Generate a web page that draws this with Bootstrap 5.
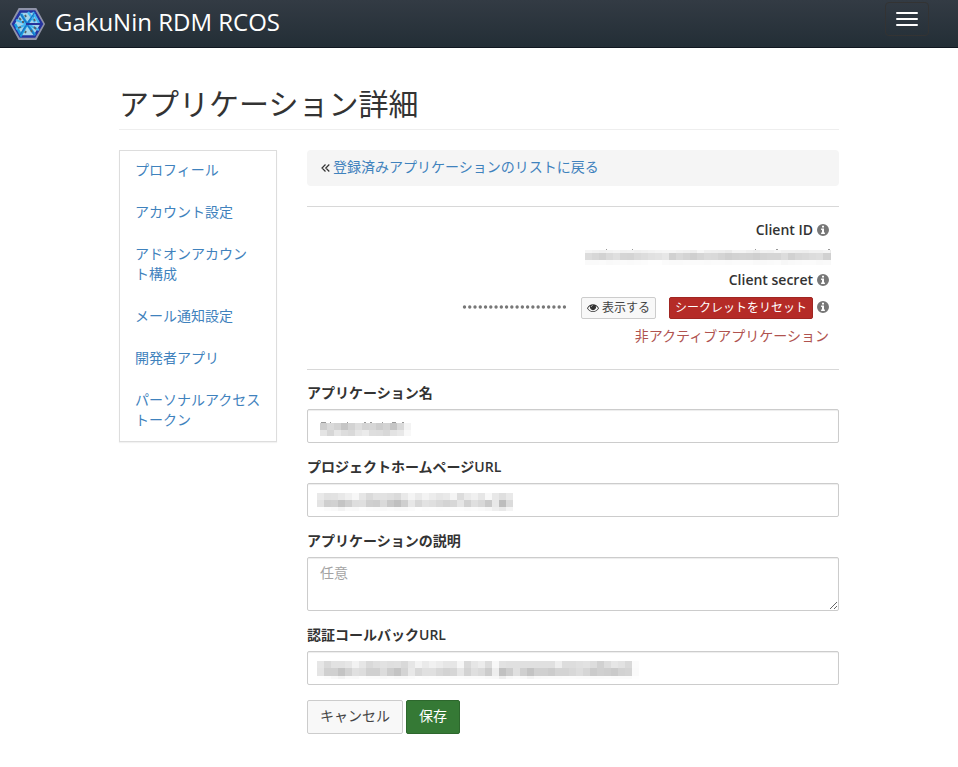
<!DOCTYPE html>
<html lang="ja">
<head>
<meta charset="utf-8">
<meta name="viewport" content="width=device-width, initial-scale=1">
<title>GakuNin RDM RCOS</title>
<link href="https://cdn.jsdelivr.net/npm/bootstrap@5.3.0/dist/css/bootstrap.min.css" rel="stylesheet">
<style>
body{font-family:"Open Sans","Noto Sans CJK JP",sans-serif;font-size:14px;line-height:20px;color:#333}
a{color:#3f82bd;text-decoration:none}
.topbar{height:48px;padding:0 29px 0 9px;background:linear-gradient(#333b44,#232e36);border-bottom:1px solid #101720}
.topbar .navbar-brand{font-size:24px;line-height:30px;color:#fff;margin:0;padding:0;gap:9px}
.topbar .navbar-brand span{margin-top:-3px}
.topbar .navbar-toggler{width:44px;height:34px;padding:0 10px;border:1px solid #333;border-radius:4px;gap:4px;margin-top:-9px}
.topbar .navbar-toggler i{height:2px;width:22px;background:#fff;border-radius:1px}
.page{width:720px;margin-left:119px}
.page-title{font-size:30px;line-height:31px;height:42px;margin:40px 0 20px;border-bottom:1px solid #eee;font-weight:400}
.side{width:158px;border:1px solid #ddd;box-shadow:0 1px 1px rgba(0,0,0,.05)}
.side .nav-link{color:#3f82bd;padding:9px 12px 11px 15px;margin-bottom:2px}
.side .nav-link:last-child{margin-bottom:0}
.main{width:532px}
.crumb{height:36px;padding:7px 14px 9px;background:#f5f5f5;border-radius:4px}
.crumb svg{margin:2px 3px 0 0}
.rule{border:0;border-top:1px solid #d8d8d8;opacity:1;margin:20px 0 0}
.creds{height:162px;padding:13px 10px 0 0}
.creds b,.field-name{font-weight:600}
.creds svg.info{width:12px;height:12px;fill:#777;flex:none}
.id-row{height:30px;margin-right:-2px}
.secret-row{margin-top:7px;height:22px}
.secret-row .dots,.secret-row .info{margin-bottom:2px}
.dots{width:105px;height:4px}
.show-btn{margin-left:14px;width:75px;gap:3px;white-space:nowrap;overflow:hidden}
.reset-btn{margin:0 4px 0 13px;width:144px;white-space:nowrap}
.inactive{margin-top:7px;color:#b0534f}
.btn{border-radius:2px;font-size:14px;line-height:20px;padding:6px 12px}
.btn-plain{background:#f8f8f8;border-color:#ccc;color:#444}
.btn-small{font-size:12px;line-height:18px;padding:1px 5px;height:22px}
.btn-small.reset-btn{padding-left:0;padding-right:0}
.btn-reset{background:#b52b27;border-color:#a02622;color:#fff}
.btn-save{background:#357935;border-color:#2d672d;color:#fff}
.fields{padding-top:13px}
.field-name{display:block;margin-bottom:6px}
.form-control{font-size:14px;line-height:20px;padding:5px 12px;border:1px solid #ccc;border-radius:2px;box-shadow:inset 0 1px 1px rgba(0,0,0,.075);color:#555}
.field-box{height:34px;margin-bottom:14px;padding:0 0 0 9px}
.form-control::placeholder{color:#a3a3a3}
textarea.form-control{height:54px;min-height:54px;margin-bottom:14px}
.actions{gap:3px;padding-top:1px}
.actions .btn{height:34px;padding:5px 12px 7px}
svg{display:block}
</style>
<script src="https://cdn.jsdelivr.net/npm/bootstrap@5.3.0/dist/js/bootstrap.bundle.min.js"></script>
</head>
<body>
<svg width="0" height="0" class="position-absolute"><defs>
<symbol id="info" viewBox="0 0 12 12"><path fill-rule="evenodd" d="M6 0a6 6 0 1 0 0 12A6 6 0 0 0 6 0zM5 1.8h2v1.6H5zM4.1 4.6H7v3.9h.9V10H4.1V8.500H5V6h-.9z"/></symbol>
</defs></svg>
<nav class="navbar topbar d-flex flex-nowrap justify-content-between">
<a class="navbar-brand d-flex align-items-center" href="#">
<svg width="37" height="34" viewBox="0 0 37 34">
<path d="M10.500 2.500h16L34.500 17l-8 14.500h-16L2.500 17z" fill="#9ccfe9" stroke="#8f93a8" stroke-width="2.800"/>
<path d="M11.500 4.500h14L32.800 17l-7.300 12.500h-14L4.200 17z" fill="#a3d3ea" stroke="#2433a0" stroke-width="2.600"/>
<path d="M12 7l6 10 8-10M6 17l6 11 6-11 8 11" fill="none" stroke="#159be1" stroke-width="2.600"/>
<path d="M19 5l7 10M24 5l6 11M7 13l11 4M7 22l11-5 12 6" fill="none" stroke="#42b4f0" stroke-width="2.200"/>
<path d="M11 6l7 11-7 11M26 5l-8 12 8 12" fill="none" stroke="#1f6fc2" stroke-width="1.200"/>
<path d="M17 17h16" stroke="#26349c" stroke-width="2"/>
<path d="M10 11l2 2M16 8l1 2M25 12l1 2M9 21l3-1M16 26l1-2M25 20l2 2M13 15l2 0M22 23l1 2" stroke="#53616b" stroke-width="1.800"/>
</svg><span>GakuNin RDM RCOS</span></a>
<button class="navbar-toggler d-flex flex-column justify-content-center" type="button" aria-label="メニュー"><i></i><i></i><i></i></button>
</nav>
<div class="page">
<h2 class="page-title">アプリケーション詳細</h2>
<div class="d-flex justify-content-between align-items-start">
<nav class="side nav flex-column">
<a class="nav-link" href="#">プロフィール</a>
<a class="nav-link" href="#">アカウント設定</a>
<a class="nav-link" href="#">アドオンアカウン<br>ト構成</a>
<a class="nav-link" href="#">メール通知設定</a>
<a class="nav-link" href="#">開発者アプリ</a>
<a class="nav-link" href="#">パーソナルアクセス<br>トークン</a>
</nav>
<main class="main">
<div class="crumb d-flex align-items-center"><svg width="9" height="10" viewBox="0 0 9 10" fill="none" stroke="#333" stroke-width="1.200"><path d="M4.500 1.500L1 5l3.500 3.500M8.300 1.500L4.800 5l3.500 3.500"/></svg><a href="#">登録済みアプリケーションのリストに戻る</a></div>
<hr class="rule">
<div class="creds d-flex flex-column align-items-end">
<div class="d-flex align-items-center gap-1"><b>Client ID</b><svg class="info"><use href="#info"/></svg></div>
<div class="id-row"><svg class="mosaic" data-key="id" width="246" height="30"></svg></div>
<div class="d-flex align-items-center gap-1"><b>Client secret</b><svg class="info"><use href="#info"/></svg></div>
<div class="secret-row d-flex align-items-center">
<svg class="dots" viewBox="0 0 105 4"><path d="M2.500 2h101" stroke="#777" stroke-width="3.400" stroke-linecap="round" stroke-dasharray="0 5.260"/></svg>
<button class="btn btn-plain btn-small d-flex align-items-center show-btn"><svg width="13" height="10" viewBox="0 0 13 10"><path fill="#333" fill-rule="evenodd" d="M0 5.200C1.500 2.500 3.700 1 6.500 1S11.500 2.500 13 5.200C11.500 7.800 9.300 9.300 6.500 9.300S1.500 7.800 0 5.200zM1 5.200C2.100 7.200 4.100 8.400 6.500 8.400S10.900 7.200 12 5.200C11.400 4.200 10.600 3.300 9.500 2.700a3.300 3.300 0 1 1-6 0C2.400 3.300 1.600 4.200 1 5.200zM6.500 2c-1.200 0-2 .9-2 2h.6c0-.8.6-1.400 1.400-1.400z"/></svg><span>表示する</span></button>
<button class="btn btn-reset btn-small reset-btn">シークレットをリセット</button>
<svg class="info"><use href="#info"/></svg>
</div>
<div class="inactive">非アクティブアプリケーション</div>
</div>
<hr class="rule m-0">
<form class="fields">
<label class="field-name">アプリケーション名</label>
<div class="form-control field-box"><svg class="mosaic" data-key="name" width="110" height="32"></svg></div>
<label class="field-name">プロジェクトホームページURL</label>
<div class="form-control field-box"><svg class="mosaic" data-key="home" width="240" height="32"></svg></div>
<label class="field-name">アプリケーションの説明</label>
<textarea class="form-control" placeholder="任意"></textarea>
<label class="field-name">認証コールバックURL</label>
<div class="form-control field-box"><svg class="mosaic" data-key="callback" width="360" height="32"></svg></div>
<div class="d-flex actions"><button type="button" class="btn btn-plain">キャンセル</button><button type="button" class="btn btn-save">保存</button></div>
</form>
</main>
</div>
</div>
<script>
// Masked values: each row is [top, height, cell greys as two hex digits]
const masks={
 id:{x:0,w:7,rows:[[10,3,"f5f2f0f2f4f1f2eff1f3f5f6f6f3f1eef7f0efeeebf4f4f0ecf2f1f5f0f0efeef1f1f4e9"],[13,7,"dcd7d2dadfd5d4dadde1e3e7d1d9d4cfd5dad9d4cfd2d3d2cfd3d5d5dcd1d7d9dcded1d0e0"],[20,5,"fafafbf9fafbfafbfcfefefbfafafbfbfbfafbfbfafbfbfbf9f9fafbf7f9fafbfbf9faf9fb"]],
  ink:"M21 9.500h1M47 9.500h1M170 9.500h1M191 9.500h2M243 9.500h2"},
 name:{x:3,w:7,rows:[[13,7,"cedad3c5d3ded4d6cdd3c5d9f3"],[20,6,"e4d6e6ddd9e6ebdeddd8e3e8f8"]],ink:"M4 12.500h5M13 12.500h1M30 12.500h1M47 12.500h2M53 12.500h2M65 12.500h1M75 12.500h4M85 12.500h2"},
 home:{x:0,w:7,rows:[[9,7,"e9e1e2e8eff7e6dae2e2dfdae9f4eaf3ece6e9f4dceaf0e6f8e8dfe9"],[16,7,"e3cfd1c4cfdedfcfcddac9c0cfe7d7e2dfd9d4d7e5d1dfd8c9e8bddb"],[23,4,"fefbf9f3faf9fdfbfaf9fbf9f9fbfefcfdfcfdfcfcfafbf9f6eee9f4"]],ink:""},
 callback:{x:0,w:7,rows:[[9,7,"e6d9e2e2e6f2e6d9dfe2dfe0d9e6f3eaf1ece6e6f6d9e6ecdcf8e2e0e0e0e0e0e0e0eedddde0e2ddd1dde6e2d9fb"],[16,8,"e4d0d0c4d2e0ddd0d0dccdc4d4e8d8e0e0d8d3d6e6d3dfdacceec1cde0cfc3d0d0ccd4d4d8ddd6cbd0cecad2d4fa"],[24,3,"fefcf8f3faf9fdfbfbf9fbf9f9fbfefcfdfcfdfcfcfbfbfbf9f8eef8fbf9f3f9fafbfbfcfcfbfbfbfbfcfbfbfbfe"]],ink:""}
};
document.querySelectorAll('.mosaic').forEach(svg=>{
 const m=masks[svg.dataset.key];let s='';
 for(const [y,h,c] of m.rows){
  for(let i=0;i<c.length/2;i++){const g=c.substr(i*2,2);s+=`<rect x="${m.x+i*m.w}" y="${y}" width="${m.w}" height="${h}" fill="#${g+g+g}"/>`}}
 if(m.ink)s+=`<path d="${m.ink}" stroke="#999" fill="none"/>`;
 svg.setAttribute('shape-rendering','crispEdges');svg.innerHTML=s;
});
</script>
</body>
</html>
